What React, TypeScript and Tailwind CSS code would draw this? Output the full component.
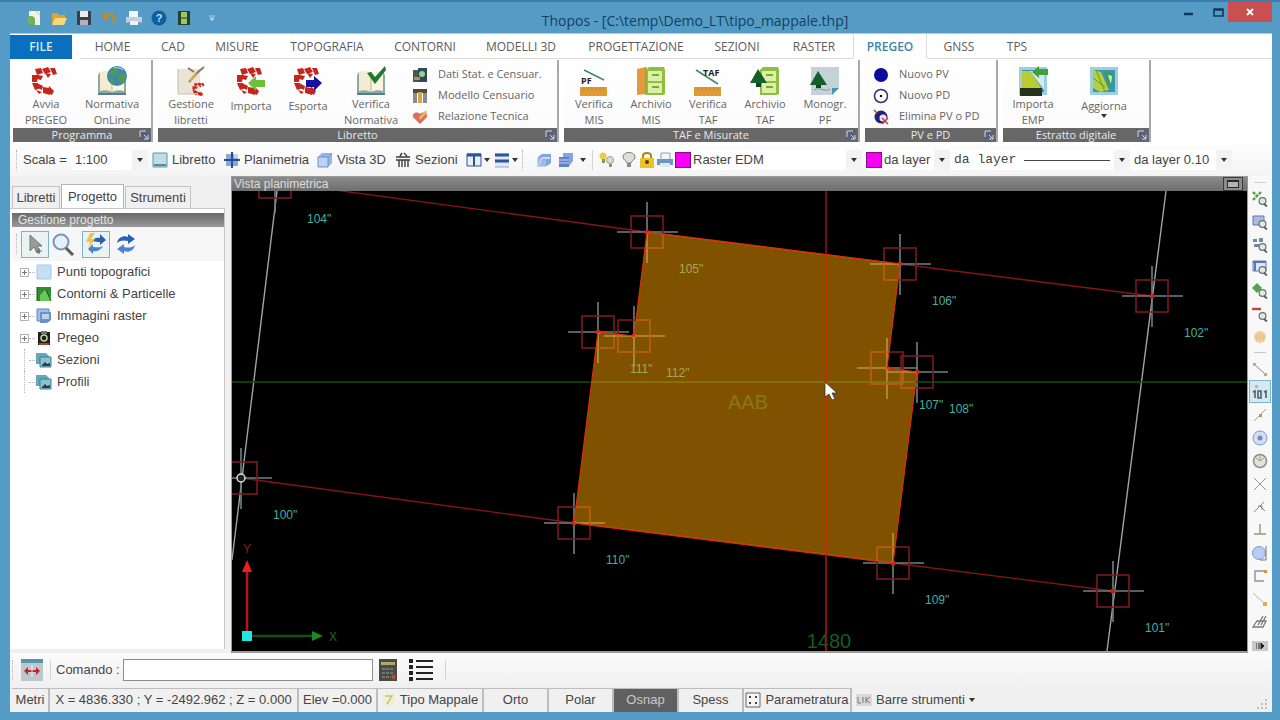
import React, { useState } from "react";
import clsx from "clsx";

const tabs = [
  { label: "HOME", width: "w-[65px]" },
  { label: "CAD", width: "w-14" },
  { label: "MISURE", width: "w-[72px]" },
  { label: "TOPOGRAFIA", width: "w-[108px]" },
  { label: "CONTORNI", width: "w-[88px]" },
  { label: "MODELLI 3D", width: "w-[104px]" },
  { label: "PROGETTAZIONE", width: "w-[126px]" },
  { label: "SEZIONI", width: "w-[76px]" },
  { label: "RASTER", width: "w-[78px]" },
  { label: "PREGEO", width: "w-[74px]" },
  { label: "GNSS", width: "w-16" },
  { label: "TPS", width: "w-[52px]" },
];

// Drawings for the big ribbon buttons, all on a 30x30 grid
const Ring = () => (
  <g fill="#c4251c">
    <path d="M4 3l6-1 2 5-6 2zM11 3l6-2 3 5-6 2zM19 2h5l2 6-4 1zM1 9l6 0-1 7-5 0zM7 9l5 1-2 4-4-1zM1 17l6 0 3 5-6 2zM8 18l4 2-1 4-4-2zM12 21l6 1 1 7-7-2zM5 24l6 2-3 2zM18 20l5 5-2 4-4-2z" />
    <path d="M14 7l6 1-3 4z" />
  </g>
);

const Book = () => (
  <g>
    <path d="M1 9l2-3h24l2 3v19H1z" fill="#8fa8a4" />
    <path d="M3 6c5-2 9-1 12 1v19c-4-2-8-2-12-1z" fill="#f4ecd2" />
    <path d="M27 6c-5-2-9-1-12 1v19c4-2 8-2 12-1z" fill="#fbf6e4" />
    <path d="M15 7v19" stroke="#c2b68e" />
    <path d="M1 28h28" stroke="#577d86" strokeWidth="2" />
  </g>
);

const Cabinet = () => (
  <g>
    <path d="M10 4l3-3h15l1 3v24l-2 1H10z" fill="#8fbf3f" />
    <path d="M12 5h14v10H12zM12 17h14v10H12z" fill="#dcefa8" />
    <path d="M16 9h7M16 21h7" stroke="#7da838" strokeWidth="2" />
  </g>
);

const Ruler = () => (
  <g>
    <path d="M1 21h27v9H1z" fill="#e09a35" />
    <path d="M5 21v4M9 21v3M13 21v4M17 21v3M21 21v4M25 21v3" stroke="#c98428" />
  </g>
);

const MapTile = () => (
  <g>
    <path d="M1 1h28v28H1z" fill="#9bd0e0" />
    <path d="M4 4h22v22H4z" fill="#3b93b8" />
  </g>
);

const bigIcons: Record<string, React.ReactNode> = {
  avvia: <Ring />,
  online: (
    <>
      <Book />
      <circle cx="20" cy="10" r="10" fill="#3f86ac" />
      <path d="M13 5l6-3 3 3-4 5-5-1zM21 9l6-2 2 5-4 6-4-4zM12 12l5 1 1 5-4-2z" fill="#4f9a58" />
      <path d="M17 2c3-1 7 0 9 2" stroke="#b9dcec" fill="none" />
    </>
  ),
  gestione: (
    <>
      <path d="M2 3h22v25H2z" fill="#e9e4d4" />
      <path d="M2 3v25h17" stroke="#c6bfa9" fill="none" />
      <path d="M12 2l6 4M28 1l-7 6-8 9" stroke="#8a7a62" strokeWidth="2" fill="none" />
      <path d="M20 7l-6 8" stroke="#d9b04c" strokeWidth="2" />
      <g transform="translate(16 16) scale(.48)">
        <Ring />
      </g>
    </>
  ),
  importa: (
    <>
      <Ring />
      <path d="M12 17l8-7v4h9v7h-9v4z" fill="#6cc03a" />
    </>
  ),
  esporta: (
    <>
      <Ring />
      <path d="M29 17l-8-7v4h-8v7h8v4z" fill="#15129e" />
    </>
  ),
  normativa: (
    <>
      <Book />
      <path d="M11 7l4-1 4 5L29 0l1 4-11 14z" fill="#1d7a2c" />
    </>
  ),
  pf: (
    <>
      <path d="M5 4l20 10" stroke="#3d8a62" strokeWidth="1.5" />
      <text x="2" y="18" fontSize="9" fontWeight="700" fill="#1c1c1c">PF</text>
      <Ruler />
    </>
  ),
  archivio: (
    <>
      <path d="M1 3l9-2v27l-9 1z" fill="#e59b3d" />
      <path d="M10 1v28" stroke="#b97321" />
      <Cabinet />
    </>
  ),
  taf: (
    <>
      <path d="M3 4l22 14" stroke="#3d8a62" strokeWidth="1.5" />
      <text x="10" y="10" fontSize="9" fontWeight="700" fill="#1c1c1c">TAF</text>
      <Ruler />
    </>
  ),
  archivioTaf: (
    <>
      <Cabinet />
      <path d="M8 3l9 14H0z" fill="#14602a" />
      <path d="M6 17h5v4H6z" fill="#0e471f" />
    </>
  ),
  monogr: (
    <>
      <path d="M1 1h28v21l-7 7H1z" fill="#c3d3d8" />
      <path d="M29 22h-7v7z" fill="#4d93b8" />
      <path d="M4 24c6-4 10 3 16-1" stroke="#7f9ca5" fill="none" />
      <path d="M8 5l9 14H0z" fill="#14602a" />
      <path d="M6 19h5v3H6z" fill="#0e471f" />
    </>
  ),
  emp: (
    <>
      <MapTile />
      <path d="M4 5h8l12 18H4z" fill="#b9cc31" />
      <path d="M12 5h14v19z" fill="#d5e9f0" />
      <path d="M2 22h22v8H2z" fill="#26331c" />
      <path d="M14 6l7-6v3h9v6h-9v3z" fill="#3fa03c" />
    </>
  ),
  aggiorna: (
    <>
      <MapTile />
      <path d="M4 4l8 2 8 18-9 2-7-4z" fill="#b7cf3c" />
      <path d="M7 4l9 22M4 12l12 9" stroke="#5f9a3a" fill="none" />
      <path d="M15 6l10 1-2 12-4 2z" fill="#3f9e54" />
      <path d="M19 9l4 1-1 8z" fill="#cfe6ee" />
    </>
  ),
};

// 16x16 icons
const smallIcons: Record<string, React.ReactNode> = {
  censuar: (
    <>
      <path d="M1 3h7v12H1z" fill="#4a5a4c" />
      <path d="M6 1h9v14H6z" fill="#2c4a5e" />
      <circle cx="10" cy="7" r="3" fill="#a9c98c" />
      <path d="M2 10h6v3H2z" fill="#c58b4b" />
    </>
  ),
  modello: (
    <>
      <path d="M1 1h14v4H1z" fill="#4e4a3c" />
      <path d="M1 5h4v10H1zM11 5h4v10h-4z" fill="#8a8c88" />
      <path d="M6 4h4v11H6z" fill="#d8a548" />
    </>
  ),
  relazione: (
    <>
      <path d="M8 15L1 8c-1-4 4-6 7-3 3-3 8-1 7 3z" fill="#d9705a" />
      <path d="M7 8l7-7 1 3-7 7z" fill="#e6b85c" />
    </>
  ),
  pv: <circle cx="8" cy="8" r="7" fill="#0c0c9c" />,
  pd: (
    <>
      <circle cx="8" cy="8" r="6.5" fill="#fff" stroke="#2f2f63" strokeWidth="1.5" />
      <circle cx="8" cy="8" r="1.2" fill="#000" />
    </>
  ),
  elimina: (
    <>
      <circle cx="8" cy="8" r="6.5" fill="#23237e" />
      <circle cx="10" cy="9" r="3.5" fill="#e7e4f3" />
      <path d="M9 9l6 6M15 9l-6 6M1 1l3 3" stroke="#c93a3a" strokeWidth="1.5" />
    </>
  ),
  libretto: (
    <>
      <path d="M1 1h14v14H1z" fill="#bfdde2" stroke="#5d9aa6" />
      <path d="M2 13h12" stroke="#4e8e9c" strokeWidth="2" />
    </>
  ),
  planimetria: (
    <>
      <path d="M2 2h12v12H2z" fill="#8ba7d8" />
      <path d="M8 0v16M0 8h16" stroke="#2c4b94" strokeWidth="2" />
      <path d="M10 2h4v4h-4z" fill="#c5d5ef" />
    </>
  ),
  cube: (
    <>
      <path d="M1 5l4-4h10v10l-4 4H1z" fill="#8fb4e6" />
      <path d="M1 5h10v10H1z" fill="#bcd4f3" stroke="#6b93cc" />
      <path d="M11 5l4-4" stroke="#6b93cc" />
    </>
  ),
  sezioni: (
    <path d="M1 5h14M1 8h14M4 8v7M7 8v7M10 8v7M13 8v7M5 4l2-3M9 1l3 3" stroke="#3b3b36" strokeWidth="1.4" fill="none" />
  ),
  columns: (
    <>
      <path d="M1 2h14v12H1z" fill="#e6effa" stroke="#2c5596" />
      <path d="M1 3h14" stroke="#2c5596" strokeWidth="3" />
      <path d="M8 3v11" stroke="#2c5596" strokeWidth="2" />
    </>
  ),
  rows: (
    <>
      <path d="M1 1h14v14H1z" fill="#dfe9f6" />
      <path d="M1 3h14M1 9h14" stroke="#2c5596" strokeWidth="3" />
      <path d="M1 15h14" stroke="#8aa8d2" />
    </>
  ),
  layers: (
    <>
      <path d="M2 5l4-3h9v9l-4 3H2z" fill="#7fa6da" />
      <path d="M2 14l4-8h8" stroke="#e8f0fb" strokeWidth="1.5" fill="none" />
      <path d="M1 6h9v9H1z" fill="#a9c4ea" opacity=".7" />
    </>
  ),
  stack: (
    <>
      <path d="M5 1h10v8l-4 5H5z" fill="#84a5dd" />
      <path d="M1 5h10v10H1z" fill="#5c82c9" />
      <path d="M1 8h10M1 11h10" stroke="#c7d7f2" />
    </>
  ),
  bulbs: (
    <>
      <circle cx="4" cy="4" r="3.5" fill="#e6cf4c" />
      <path d="M3 7h3v4H3z" fill="#9a8f52" />
      <circle cx="11" cy="8" r="3.5" fill="#dcdccb" stroke="#a3a08b" />
      <path d="M10 12h3v3h-3z" fill="#8c8c80" />
    </>
  ),
  bulb: (
    <>
      <path d="M2 5c0-6 12-6 12 0 0 3-4 4-4 6H6c0-2-4-3-4-6z" fill="#dedfdc" stroke="#7d7d7a" />
      <path d="M6 11h4v4H6z" fill="#8b8b86" />
    </>
  ),
  lock: (
    <>
      <path d="M4 7V4c0-4 8-4 8 0v3" stroke="#a98616" strokeWidth="2" fill="none" />
      <path d="M1 6h14v10H1z" fill="#f0bf2c" />
      <circle cx="8" cy="10" r="2" fill="#523c06" />
    </>
  ),
  printer: (
    <>
      <path d="M4 1h9v7H4z" fill="#f2f5f8" stroke="#8aa3bb" />
      <path d="M0 7h16v6H0z" fill="#6f96bf" />
      <path d="M3 11h10v4H3z" fill="#dfe8f1" />
    </>
  ),
  quickPrint: (
    <>
      <path d="M3 1h9v8H3z" fill="#f4f7fa" />
      <path d="M0 7h16v6H0z" fill="#c3cfe0" />
      <path d="M1 12h14v2H1z" fill="#8393b0" />
      <path d="M4 11h8v4H4z" fill="#eef2f7" />
    </>
  ),
  punti: <path d="M1 1h14v14H1z" fill="#c4def3" stroke="#a4c6e2" />,
  contorni: (
    <>
      <path d="M1 1h14v14H1z" fill="#2f8d35" />
      <path d="M4 9l5-5 6 8v3H4z" fill="#6cc659" />
      <path d="M1 1v14M10 4l5 11" stroke="#15531c" />
    </>
  ),
  immagini: (
    <>
      <path d="M1 1h12v12H1z" fill="#9dbfe5" stroke="#5f8cc0" />
      <path d="M4 4h11v8l-4 3H4z" fill="#6792cb" />
      <path d="M6 6h7v5H6z" fill="#bcd2ee" />
    </>
  ),
  pregeo: (
    <>
      <path d="M2 2h12v13H2z" fill="#231d18" />
      <path d="M5 1h6v3H5z" fill="#7a756c" />
      <circle cx="8" cy="8" r="3" fill="none" stroke="#b5d2a7" strokeWidth="1.5" />
      <path d="M3 14h10" stroke="#b8402c" strokeWidth="2" />
    </>
  ),
  sheets: (
    <>
      <path d="M0 1h10l3 3v8H0z" fill="#61a9b9" />
      <path d="M4 5h11v10H4z" fill="#8cc2cf" stroke="#3f7f92" />
      <path d="M6 13l3-3 2 2 3-1v3H6z" fill="#2c3a42" />
    </>
  ),
  page: (
    <>
      <path d="M3 1h11v14H3z" fill="#f1f1e4" />
      <path d="M1 10a4 4 0 0 1 8 0v5H3z" fill="#6fb05a" />
      <path d="M10 1l4 4" stroke="#b9c2a4" />
    </>
  ),
  folder: (
    <>
      <path d="M1 3h5l2 2h6v9H1z" fill="#d9a63a" />
      <path d="M4 8h12l-3 7H1z" fill="#f6d77c" />
    </>
  ),
  save: (
    <>
      <path d="M1 1h14v14H1z" fill="#3a3f4b" />
      <path d="M4 1h8v6H4z" fill="#e9ebef" />
      <path d="M4 10h8v5H4z" fill="#aeb2bb" />
    </>
  ),
  undo: (
    <>
      <path d="M5 7c3-5 10-3 8 6" stroke="#c08a2e" strokeWidth="3" fill="none" />
      <path d="M1 2l1 8 7-2z" fill="#c08a2e" />
    </>
  ),
  help: (
    <>
      <circle cx="8" cy="8" r="7.5" fill="#0d5f9f" />
      <text x="8" y="12" fontSize="11" fontWeight="700" textAnchor="middle" fill="#bfe4fb">?</text>
    </>
  ),
  ledger: (
    <>
      <path d="M2 1h12v14H2z" fill="#26402b" />
      <path d="M5 2h6v12H5z" fill="#9bc95b" />
      <path d="M5 8h6" stroke="#26402b" />
    </>
  ),
};

const lens = (
  <>
    <circle cx="10.5" cy="10" r="3.4" fill="#dfe9e6" stroke="#66726f" strokeWidth="1.2" />
    <path d="M12 13l3 2.500" stroke="#55605d" strokeWidth="1.8" />
  </>
);

const sideTools: { name: string; art: React.ReactNode }[] = [
  { name: "Zoom estensione", art: <><path d="M1 1l4 4M9 1L5 5M1 9l4-4" stroke="#5c9c48" strokeWidth="2.4" strokeDasharray="3 1" />{lens}</> },
  { name: "Zoom finestra", art: <><path d="M1 2h11v9H1z" fill="#a9bbdf" stroke="#6078b4" />{lens}</> },
  { name: "Zoom precedente", art: <><path d="M1 2h4v3H1zM7 1h4v4H7zM2 7h5v3H2z" fill="#7387a8" />{lens}</> },
  { name: "Zoom pagina", art: <><path d="M1 1h13v10H1z" fill="#dfe8f7" stroke="#5c77b8" /><path d="M1 2h13M3 1v10" stroke="#5c77b8" strokeWidth="2" />{lens}</> },
  { name: "Zoom avanti", art: <><path d="M5 0l5 5-5 5-5-5z" fill="#4fa548" />{lens}</> },
  { name: "Zoom indietro", art: <><path d="M0 3h9" stroke="#c9433a" strokeWidth="2.4" />{lens}</> },
  { name: "Pan", art: <><circle cx="8" cy="8" r="6" fill="#f0cf9d" /><path d="M5 6v5M8 4v7M11 6v5" stroke="#e3b87c" /></> },
  { name: "Fine", art: <><path d="M2 3l11 10" stroke="#8d8a76" /><path d="M1 2h3v3H1zM12 12h3v3h-3z" fill="#dfa259" /></> },
  { name: "Punto", art: <><path d="M3 1h3v3H3z" fill="#d6b95e" /><path d="M1 8l2-1v7M7 7h2v7H6V7zM12 8l2-1v7" stroke="#50606a" strokeWidth="1.6" fill="none" /></> },
  { name: "Medio", art: <><path d="M2 14L14 2" stroke="#a8a595" /><path d="M7 7h3v3H7z" fill="#bf9d52" /></> },
  { name: "Centro", art: <><circle cx="8" cy="8" r="7" fill="#d2def2" stroke="#7d99cd" /><circle cx="8" cy="8" r="2.500" fill="#7089bd" /></> },
  { name: "Quadrante", art: <><circle cx="8" cy="8" r="6.500" fill="#e3e3da" stroke="#8e8e80" strokeWidth="1.500" /><path d="M8 1v6M4 5l4 3 4-3" stroke="#9d9a84" fill="none" /></> },
  { name: "Intersezione", art: <path d="M2 2l12 12M14 2L2 14" stroke="#98988a" /> },
  { name: "Apparente", art: <path d="M2 13L12 3M8 7l5 5M6 7h4v4" stroke="#8c8c7e" fill="none" /> },
  { name: "Perpendicolare", art: <path d="M8 2v10M2 12h12" stroke="#9a957a" strokeWidth="1.4" /> },
  { name: "Tangente", art: <><circle cx="7" cy="8" r="6.500" fill="#b6cdf5" stroke="#7d9ad4" /><path d="M14 1v14H8" stroke="#77775f" fill="none" /></> },
  { name: "Vicino", art: <><path d="M13 3H3v10h9" stroke="#8891a4" strokeWidth="1.4" fill="none" /><path d="M12 2h3v3h-3z" fill="#dd9047" /></> },
  { name: "Estensione", art: <><path d="M1 2l11 10" stroke="#bdb58a" /><path d="M11 11h4v4h-4z" fill="#dcb050" /></> },
  { name: "Parallelo", art: <path d="M1 13L5 7h9l-3 6zM6 11l5-9M9 11l5-9" stroke="#717b80" strokeWidth="1.3" fill="none" /> },
];

function Icon({ name, className = "size-4" }: { name: string; className?: string }) {
  return (
    <svg viewBox="0 0 16 16" className={clsx("shrink-0", className)} aria-hidden="true">
      {smallIcons[name]}
    </svg>
  );
}

const Arrow = () => (
  <svg viewBox="0 0 6 4" className="h-1 w-1.5 shrink-0" aria-hidden="true">
    <path d="M0 0h6L3 4z" fill="#333" />
  </svg>
);

const Grip = () => <span className="h-5 w-px shrink-0 border-l border-dotted border-[#b5b5b5]" />;
const Divider = () => <span className="h-5 w-px shrink-0 bg-[#d4d4d4]" />;

function BigButton({
  icon,
  lines,
  width,
  menu,
}: {
  icon: string;
  lines: string[];
  width: string;
  menu?: boolean;
}) {
  return (
    <button className={clsx("flex shrink-0 flex-col items-center pt-1.5", width)}>
      <svg viewBox="0 0 30 30" className="size-[30px]" aria-hidden="true">
        {bigIcons[icon]}
      </svg>
      <span className={clsx("text-[11px] leading-4 text-[#666]", lines.length === 1 && "pt-0.5")}>
        {lines.map((l) => (
          <span key={l} className="block whitespace-nowrap">
            {l}
          </span>
        ))}
      </span>
      {menu && <Arrow />}
    </button>
  );
}

function SmallButton({ icon, label }: { icon: string; label: string }) {
  return (
    <button className="flex h-[21px] items-center gap-2.5 whitespace-nowrap text-[11px] text-[#666]">
      <Icon name={icon} />
      {label}
    </button>
  );
}

function Group({
  title,
  width,
  children,
}: {
  title: string;
  width: string;
  children: React.ReactNode;
}) {
  return (
    <section
      className={clsx(
        "flex shrink-0 flex-col border-r-2 border-[#a9a9a9] bg-gradient-to-b from-white to-[#fafafa]",
        width
      )}
    >
      <div className="flex flex-1">{children}</div>
      <div className="flex h-3.5 items-center bg-[#676767] pr-0.5">
        <h2 className="flex-1 pl-3 text-center text-[11px] leading-[14px] text-[#e8e8e8]">{title}</h2>
        <button aria-label={`Opzioni ${title}`} className="bg-[#5b6177]">
          <svg viewBox="0 0 10 10" className="size-2.5">
            <path d="M1 7V1h6M5 5l4 4M9 5v4H5" stroke="#d5dbee" fill="none" />
          </svg>
        </button>
      </div>
    </section>
  );
}

function Combo({
  label,
  value,
  width,
  swatch,
  mono,
  line,
}: {
  label: string;
  value: string;
  width: string;
  swatch?: boolean;
  mono?: boolean;
  line?: boolean;
}) {
  return (
    <div className={clsx("flex h-5 shrink-0 items-center bg-white", width)}>
      {swatch && <span className="size-4 shrink-0 border border-[#8a0a8a] bg-[#f500f5]" />}
      <select
        aria-label={label}
        className={clsx(
          "min-w-0 appearance-none bg-transparent outline-none",
          swatch ? "pl-0.5" : "pl-1",
          mono && "font-['Liberation_Mono',monospace]",
          line ? "w-[70px]" : "flex-1"
        )}
      >
        <option>{value}</option>
      </select>
      {line && <span className="mx-1 h-px flex-1 bg-[#444]" />}
      <span className="flex h-5 w-4 shrink-0 items-center justify-center bg-[#f3f3f3]">
        <Arrow />
      </span>
    </div>
  );
}

function ToolButton({ icon, label, width }: { icon: string; label: string; width: string }) {
  return (
    <button className={clsx("flex shrink-0 items-center gap-1 whitespace-nowrap", width)}>
      <Icon name={icon} />
      {label}
    </button>
  );
}

function IconButton({ icon, label, menu }: { icon: string; label: string; menu?: boolean }) {
  return (
    <button aria-label={label} className="flex shrink-0 items-center gap-0.5">
      <Icon name={icon} />
      {menu && <Arrow />}
    </button>
  );
}

const tree = [
  { label: "Punti topografici", icon: "punti", open: true },
  { label: "Contorni & Particelle", icon: "contorni", open: true },
  { label: "Immagini raster", icon: "immagini", open: true },
  { label: "Pregeo", icon: "pregeo", open: true },
  { label: "Sezioni", icon: "sheets", open: false },
  { label: "Profili", icon: "sheets", open: false },
];

// Survey points in drawing units
const points = [
  { id: 104, x: 275, y: 182 },
  { id: 105, x: 647, y: 232 },
  { id: 106, x: 900, y: 264 },
  { id: 102, x: 1152, y: 296 },
  { id: 111, x: 598, y: 332 },
  { id: 112, x: 634, y: 336 },
  { id: 107, x: 887, y: 368 },
  { id: 108, x: 917, y: 372 },
  { id: 100, x: 241, y: 478 },
  { id: 110, x: 574, y: 523 },
  { id: 109, x: 893, y: 563 },
  { id: 101, x: 1113, y: 591 },
];

const parcel = "647,232 900,264 887,368 917,372 893,563 574,523 598,332 634,336";

function PlanView() {
  return (
    <svg
      viewBox="232 191 1015 460"
      preserveAspectRatio="xMinYMin slice"
      className="min-h-0 w-full flex-1 bg-black font-['Liberation_Sans',sans-serif]"
      role="img"
      aria-label="Vista planimetrica"
    >
      <path d="M277 191L232 560M1166 191L1107 651" stroke="#a3a3a3" strokeWidth="1.4" />
      <path
        d="M275 182L647 232L900 264L1152 296M241 478L574 523L893 563L1113 591"
        stroke="#84141a"
        strokeWidth="1.4"
        fill="none"
      />
      {points.map((p) => (
        <g key={p.id} fill="none">
          <path d={`M${p.x - 30} ${p.y}h61M${p.x} ${p.y - 30}v61`} stroke="#6d8382" strokeWidth="1.6" />
          <rect x={p.x - 16} y={p.y - 16} width="32" height="32" stroke="#7c1a20" strokeWidth="1.6" />
          <circle cx={p.x} cy={p.y} r="2.5" fill="#c4201c" />
        </g>
      ))}
      <circle cx="241" cy="478" r="4" fill="#222" stroke="#ddd" strokeWidth="1.5" />
      {points.map((p) => (
        <text key={p.id} x={p.x + 32} y={p.y + 41} fontSize="12" fill="#45b09f">
          {p.id}"
        </text>
      ))}
      <path d="M232 382h1015" stroke="#124f16" strokeWidth="1.4" />
      <path d="M826 191v460" stroke="#8c141a" strokeWidth="1.6" />
      <polygon points={parcel} fill="#ffa400" fillOpacity="0.5" stroke="#d8300e" strokeWidth="1.2" />
      <path d="M826 255v300" stroke="#c42408" strokeWidth="1.6" />
      <text x="748" y="409" fontSize="20" textAnchor="middle" fill="#8a7812">AAB</text>
      <text x="829" y="648" fontSize="20" textAnchor="middle" fill="#1b5a1e">1480</text>
      <path d="M826 555v96" stroke="#8c141a" strokeWidth="1.6" />
      {/* UCS axes */}
      <path d="M247 632v-64" stroke="#b3141c" strokeWidth="2.500" />
      <path d="M247 560l5 12h-10z" fill="#ee1c24" />
      <path d="M252 636h62" stroke="#174d19" strokeWidth="2.500" />
      <path d="M323 636l-11-5v10z" fill="#1c8a22" />
      <path d="M242 631h10v10h-10z" fill="#22e6e0" />
      <text x="247" y="553" fontSize="12" textAnchor="middle" fill="#9c161c">Y</text>
      <text x="333" y="641" fontSize="12" textAnchor="middle" fill="#1c6a20">X</text>
      <path d="M825 382v15l4-3 3 6 3-1-3-6h5z" fill="#fff" stroke="#333" strokeWidth=".8" />
    </svg>
  );
}

const cell = "flex h-6 shrink-0 items-center justify-center gap-1 border-t border-r-2 border-[#bdbdbd] whitespace-nowrap";

export default function App() {
  const [activeTab, setActiveTab] = useState("PREGEO");

  return (
    <div className="flex min-h-screen flex-col overflow-hidden border-t-2 border-[#3b7eaa] bg-[#549bc5] pr-2 pb-2 pl-2.5 font-['Liberation_Sans',Arial,sans-serif] text-[13px] text-[#444]">
      {/* Title bar */}
      <header className="flex h-[31px] items-center">
        <div className="flex w-[212px] shrink-0 items-center gap-[9px] pl-4">
          <IconButton icon="page" label="Nuovo" />
          <IconButton icon="folder" label="Apri" />
          <IconButton icon="save" label="Salva" />
          <IconButton icon="undo" label="Annulla" />
          <IconButton icon="quickPrint" label="Stampa" />
          <IconButton icon="help" label="Guida" />
          <IconButton icon="ledger" label="Libretto" />
          <button aria-label="Personalizza" className="ml-2 shrink-0">
            <svg viewBox="0 0 6 6" className="size-1.5">
              <path d="M0 1h6M1 3h4L3 6z" stroke="#a9cfe6" fill="#a9cfe6" />
            </svg>
          </button>
        </div>
        <h1 className="flex-1 pt-1.5 text-center font-['Open_Sans',sans-serif] text-sm whitespace-nowrap text-[#143f60]">
          Thopos - [C:\temp\Demo_LT\tipo_mappale.thp]
        </h1>
        <div className="flex w-[104px] shrink-0 self-start text-[#123a58]">
          <button aria-label="Riduci" className="flex h-5 w-10 items-center justify-center">
            <svg viewBox="0 0 9 9" className="size-[9px]">
              <path d="M0 6h9" stroke="currentColor" strokeWidth="2.500" />
            </svg>
          </button>
          <button aria-label="Ingrandisci" className="flex h-5 w-5 items-center justify-center">
            <svg viewBox="0 0 11 9" className="h-[9px] w-[11px]">
              <path d="M1 1h9v7H1zM1 2h9" stroke="currentColor" strokeWidth="1.600" fill="none" />
            </svg>
          </button>
          <button aria-label="Chiudi" className="flex h-5 w-11 items-center justify-center bg-[#c94f50]">
            <svg viewBox="0 0 8 8" className="size-2">
              <path d="M1 1l6 6M7 1L1 7" stroke="#fff" strokeWidth="1.800" />
            </svg>
          </button>
        </div>
      </header>

      {/* Ribbon */}
      <nav className="flex h-[26px] items-end border-t border-[#a9cde2] bg-white font-['Open_Sans',sans-serif] text-xs">
        <button className="mr-2 h-6 w-[62px] shrink-0 bg-[#0b6fc0] font-semibold text-[#d6ecfb]">FILE</button>
        {tabs.map((t) => (
          <button
            key={t.label}
            onClick={() => setActiveTab(t.label)}
            className={clsx(
              "h-[25px] shrink-0 border-b border-[#dcdcdc] pt-0.5 whitespace-nowrap",
              t.width,
              activeTab === t.label
                ? "border-x border-b-transparent font-semibold text-[#3c86ab]"
                : "text-[#5c5c5c]"
            )}
          >
            {t.label}
          </button>
        ))}
        <span className="h-[25px] flex-1 border-b border-[#dcdcdc]" />
      </nav>
      <div className="flex h-[85px] gap-[5px] bg-white pt-px pb-0.5 pl-[3px] font-['Open_Sans',sans-serif]">
        <Group title="Programma" width="w-[140px]">
          <BigButton icon="avvia" lines={["Avvia", "PREGEO"]} width="w-[66px]" />
          <BigButton icon="online" lines={["Normativa", "OnLine"]} width="w-[66px]" />
        </Group>
        <Group title="Libretto" width="w-[401px]">
          <BigButton icon="gestione" lines={["Gestione", "libretti"]} width="w-[66px]" />
          <BigButton icon="importa" lines={["Importa"]} width="w-[54px]" />
          <BigButton icon="esporta" lines={["Esporta"]} width="w-[60px]" />
          <BigButton icon="normativa" lines={["Verifica", "Normativa"]} width="w-[66px]" />
          <div className="flex flex-col pt-1 pl-2">
            <SmallButton icon="censuar" label="Dati Stat. e Censuar." />
            <SmallButton icon="modello" label="Modello Censuario" />
            <SmallButton icon="relazione" label="Relazione Tecnica" />
          </div>
        </Group>
        <Group title="TAF e Misurate" width="w-[296px]">
          <BigButton icon="pf" lines={["Verifica", "MIS"]} width="w-[60px]" />
          <BigButton icon="archivio" lines={["Archivio", "MIS"]} width="w-[54px]" />
          <BigButton icon="taf" lines={["Verifica", "TAF"]} width="w-[60px]" />
          <BigButton icon="archivioTaf" lines={["Archivio", "TAF"]} width="w-[54px]" />
          <BigButton icon="monogr" lines={["Monogr.", "PF"]} width="w-[66px]" />
        </Group>
        <Group title="PV e PD" width="w-[133px]">
          <div className="flex flex-col pt-1 pl-2">
            <SmallButton icon="pv" label="Nuovo PV" />
            <SmallButton icon="pd" label="Nuovo PD" />
            <SmallButton icon="elimina" label="Elimina PV o PD" />
          </div>
        </Group>
        <Group title="Estratto digitale" width="w-[148px]">
          <BigButton icon="emp" lines={["Importa", "EMP"]} width="w-[60px]" />
          <BigButton icon="aggiorna" lines={["Aggiorna"]} width="w-[82px]" menu />
        </Group>
      </div>

      {/* Toolbar */}
      <div className="flex h-8 items-center bg-gradient-to-b from-[#fdfdfd] to-[#f4f4f4] pl-1.5">
        <Grip />
        <span className="w-[54px] shrink-0 pl-1.5">Scala =</span>
        <Combo label="Scala" value="1:100" width="w-[77px]" />
        <span className="w-1 shrink-0" />
        <ToolButton icon="libretto" label="Libretto" width="w-[72px]" />
        <ToolButton icon="planimetria" label="Planimetria" width="w-[93px]" />
        <ToolButton icon="cube" label="Vista 3D" width="w-[78px]" />
        <ToolButton icon="sezioni" label="Sezioni" width="w-[71px]" />
        <div className="flex shrink-0 items-center gap-1">
          <IconButton icon="columns" label="Affianca" menu />
          <IconButton icon="rows" label="Sovrapponi" menu />
        </div>
        <div className="ml-1 flex shrink-0 items-center gap-1.5">
          <Grip />
          <span className="w-px" />
          <IconButton icon="layers" label="Layer" />
          <IconButton icon="stack" label="Gestione layer" />
          <Arrow />
          <Divider />
          <IconButton icon="bulbs" label="Isola" />
          <IconButton icon="bulb" label="Accendi" />
        </div>
        <div className="mr-0.5 ml-0.5 flex shrink-0 items-center gap-0.5">
          <IconButton icon="lock" label="Blocca" />
          <IconButton icon="printer" label="Stampabile" />
        </div>
        <Combo label="Layer" value="Raster EDM" width="w-[187px]" swatch />
        <span className="w-1 shrink-0" />
        <Combo label="Colore" value="da layer" width="w-[84px]" swatch />
        <Combo label="Tipo linea" value="da layer" width="w-[180px]" mono line />
        <Combo label="Spessore" value="da layer 0.10" width="w-[102px]" />
      </div>

      <main className="flex flex-1 bg-[#f0f0f0]">
        {/* Project dock */}
        <aside className="flex w-[221px] shrink-0 flex-col pt-2 pr-1.5 pb-1">
          <div className="flex items-end gap-px pl-0.5" role="tablist">
            <button role="tab" className="h-[22px] w-12 border border-b-0 border-[#c4c4c4] text-center">Libretti</button>
            <button role="tab" aria-selected="true" className="h-6 w-[63px] border border-b-0 border-[#b4b4b4] bg-white text-center">Progetto</button>
            <button role="tab" className="h-[22px] w-[66px] border border-b-0 border-[#c4c4c4] text-center">Strumenti</button>
          </div>
          <div className="flex flex-1 flex-col border-t border-r border-[#c9c9c9] bg-white pt-1 pl-0.5">
            <h2 className="h-3.5 bg-gradient-to-b from-[#6a6a6a] to-[#989898] pl-1.5 text-xs leading-[14px] text-[#e4e4e4]">
              Gestione progetto
            </h2>
            <div className="flex h-[34px] items-center bg-[#f6f6f6] pl-1">
              <Grip />
              <button aria-label="Seleziona" className="ml-1 flex h-[27px] w-7 items-center justify-center border border-[#7fb2cf] bg-[#eaf3f4]">
                <svg viewBox="0 0 20 20" className="size-5">
                  <path d="M5 1v16l4-4 3 6 3-1-3-6h5z" fill="#9a9a9a" stroke="#777" />
                  <path d="M14 14v6M11 17h6" stroke="#666" />
                </svg>
              </button>
              <button aria-label="Zoom" className="ml-0.5 flex size-6 items-center justify-center">
                <svg viewBox="0 0 24 24" className="size-6">
                  <circle cx="10" cy="10" r="7.500" fill="#e6f0fa" stroke="#7c95b4" strokeWidth="2" />
                  <path d="M15 16l7 7" stroke="#5b5b5b" strokeWidth="3" />
                </svg>
              </button>
              <button aria-label="Aggiornamento automatico" className="ml-[7px] flex h-[27px] w-7 items-center justify-center border border-[#7fb2cf] bg-[#eaf3f4]">
                <svg viewBox="0 0 22 22" className="size-[22px]">
                  <path d="M6 9c2-4 6-5 9-4V1l6 6-6 5V9c-4 0-6-1-9 0z" fill="#2c5fb2" />
                  <path d="M18 13c-2 4-6 6-10 5v3l-5-5 5-5v3c4 0 7 1 10-1z" fill="#4c82cf" />
                  <path d="M5 0L1 9h4l-2 7 7-10H6l4-6z" fill="#f0c24a" />
                </svg>
              </button>
              <button aria-label="Aggiorna" className="ml-1 flex size-6 items-center justify-center">
                <svg viewBox="0 0 22 22" className="size-[22px]">
                  <path d="M2 10c1-6 7-8 11-6V1l7 5-7 5V8c-4-1-8-1-11 2z" fill="#2c5fb2" />
                  <path d="M20 12c-1 6-7 8-11 6v3l-7-5 7-5v3c4 1 8 1 11-2z" fill="#4c82cf" />
                </svg>
              </button>
            </div>
            <ul className="pl-2">
              {tree.map((n) => (
                <li key={n.label} className="flex h-[22px] items-center">
                  {n.open ? (
                    <button
                      aria-label={`Espandi ${n.label}`}
                      className="flex size-[9px] items-center justify-center border border-[#b3b3b3] bg-white"
                    >
                      <svg viewBox="0 0 5 5" className="size-[5px]">
                        <path d="M0 2.500h5M2.500 0v5" stroke="#777" />
                      </svg>
                    </button>
                  ) : (
                    <span className="ml-1 h-[22px] w-[5px] border-l border-dotted border-[#b5b5b5]" />
                  )}
                  <span className="mr-px w-1.5 border-t border-dotted border-[#b5b5b5]" />
                  <Icon name={n.icon} />
                  <span className="pl-[5px] whitespace-nowrap">{n.label}</span>
                </li>
              ))}
            </ul>
          </div>
        </aside>

        {/* Drawing window */}
        <section className="flex min-w-0 flex-1 flex-col border border-b-2 border-[#9a9a9a]">
          <div className="flex h-3.5 items-center justify-between bg-gradient-to-b from-[#8b8b8b] to-[#6e6e6e] pr-1 pl-0.5">
            <h2 className="text-xs leading-[14px] text-[#dcdcdc]">Vista planimetrica</h2>
            <button aria-label="Ingrandisci vista" className="flex h-3.5 w-5 items-center justify-center border border-[#3c3c3c] bg-[#8c8c8c]">
              <span className="h-2 w-3 border border-t-2 border-[#2a2a2a] bg-[#b5b5b5]" />
            </button>
          </div>
          <PlanView />
        </section>

        {/* Zoom and snap tools */}
        <aside className="flex w-6 shrink-0 flex-col items-center bg-[#f8f8f8] pt-1.5">
          <span className="mb-1 h-px w-3 bg-[#d0d0d0]" />
          {sideTools.map((t, i) => (
            <React.Fragment key={t.name}>
              {i === 7 && <span className="my-1 h-px w-3 bg-[#c8c8c8]" />}
              <button
                aria-label={t.name}
                className={clsx(
                  "flex h-[23px] w-[22px] items-center justify-center",
                  t.name === "Punto" && "border border-[#7db4d2] bg-[#d5e9f4]"
                )}
              >
                <svg viewBox="0 0 16 16" className="size-4">
                  {t.art}
                </svg>
              </button>
            </React.Fragment>
          ))}
          <button aria-label="Altri strumenti" className="mt-2 flex h-2.5 w-4 items-center justify-center bg-[#c9c9c9]">
            <svg viewBox="0 0 8 6" className="h-1.5 w-2">
              <path d="M0 0v6M3 0v6M5 0l3 3-3 3z" stroke="#222" fill="#222" />
            </svg>
          </button>
        </aside>
      </main>

      {/* Command line */}
      <div className="flex h-[34px] items-center bg-gradient-to-b from-[#fbfbfb] to-[#f0f0f0] pl-0.5">
        <Grip />
        <button aria-label="Blocca comando" className="ml-[7px] shrink-0">
          <svg viewBox="0 0 24 22" className="h-[22px] w-6">
            <path d="M1 0h22v22H1z" fill="#bcc8cc" />
            <path d="M1 0h22v4H1z" fill="#5595a8" />
            <path d="M4 12l4-4v3h8V8l4 4-4 4v-3H8v3z" fill="#c8202a" />
            <path d="M12 6v12" stroke="#e9eef0" />
          </svg>
        </button>
        <span className="mx-1.5 flex">
          <Divider />
        </span>
        <label htmlFor="comando" className="w-[67px] shrink-0 -ml-px">
          Comando :
        </label>
        <input
          id="comando"
          className="h-[22px] w-[250px] shrink-0 border border-[#8c8c8c] bg-white px-1 outline-none"
        />
        <button aria-label="Calcolatrice" className="ml-1.5 shrink-0">
          <svg viewBox="0 0 18 22" className="h-[22px] w-[18px]">
            <path d="M0 0h18v22H0z" fill="#4b4a47" />
            <path d="M2 3h14v3H2z" fill="#b5a968" />
            <path d="M3 10h12M3 14h12M3 18h9" stroke="#77746c" strokeWidth="2" strokeDasharray="3 1" />
            <path d="M13 16h3v4h-3z" fill="#b0533a" />
          </svg>
        </button>
        <button aria-label="Elenco comandi" className="mx-3 shrink-0">
          <svg viewBox="0 0 24 22" className="h-[22px] w-6">
            <path d="M7 2h17M7 8h17M7 14h17M7 20h17" stroke="#222" strokeWidth="2" />
            <path d="M0 0h4v4H0zM0 6h4v4H0zM0 12h4v4H0zM0 18h4v4H0z" fill="#222" />
          </svg>
        </button>
        <Divider />
      </div>

      {/* Status bar */}
      <footer className="flex h-[25px] items-center bg-[#f0f0f0] pl-0.5">
        <span className={clsx(cell, "w-[38px]")}>Metri</span>
        <span className={clsx(cell, "w-[249px]")}>X = 4836.330 ; Y = -2492.962 ; Z = 0.000</span>
        <span className={clsx(cell, "w-[79px]")}>Elev =0.000</span>
        <button className={clsx(cell, "w-[106px]")}>
          <svg viewBox="0 0 14 14" className="size-3.5">
            <path d="M1 1h12v12H1z" fill="#f1efcf" />
            <path d="M3 3h7L5 11" stroke="#c8c276" strokeWidth="1.500" fill="none" />
          </svg>
          Tipo Mappale
        </button>
        <button className={clsx(cell, "w-[65px]")}>Orto</button>
        <button className={clsx(cell, "w-[65px]")}>Polar</button>
        <button aria-pressed="true" className={clsx(cell, "w-[65px] bg-[#606060] text-[#c9c9c9]")}>Osnap</button>
        <button className={clsx(cell, "w-[65px]")}>Spess</button>
        <button className={clsx(cell, "w-[108px]")}>
          <svg viewBox="0 0 16 16" className="size-4">
            <path d="M1 1h14v14H1z" fill="#f4f4f4" stroke="#666" />
            <path d="M4 4h2v2H4zM10 4h2v2h-2zM4 10h2v2H4zM10 10h2v2h-2z" fill="#444" />
          </svg>
          Parametratura
        </button>
        <button className="flex items-center gap-1 pl-1 whitespace-nowrap">
          <svg viewBox="0 0 16 12" className="h-3 w-4">
            <path d="M0 0h16v12H0z" fill="#d9d9d9" />
            <path d="M2 3v6h3M7 3v6M10 3v6M14 3l-4 3 4 3" stroke="#777" fill="none" />
          </svg>
          Barre strumenti
          <Arrow />
        </button>
        <svg viewBox="0 0 12 12" className="mt-2 mr-1 ml-auto size-3 shrink-0" aria-hidden="true">
          <path d="M9 1h2v2H9zM5 5h2v2H5zM9 5h2v2H9zM1 9h2v2H1zM5 9h2v2H5zM9 9h2v2H9z" fill="#c9b9b2" />
        </svg>
      </footer>
    </div>
  );
}
